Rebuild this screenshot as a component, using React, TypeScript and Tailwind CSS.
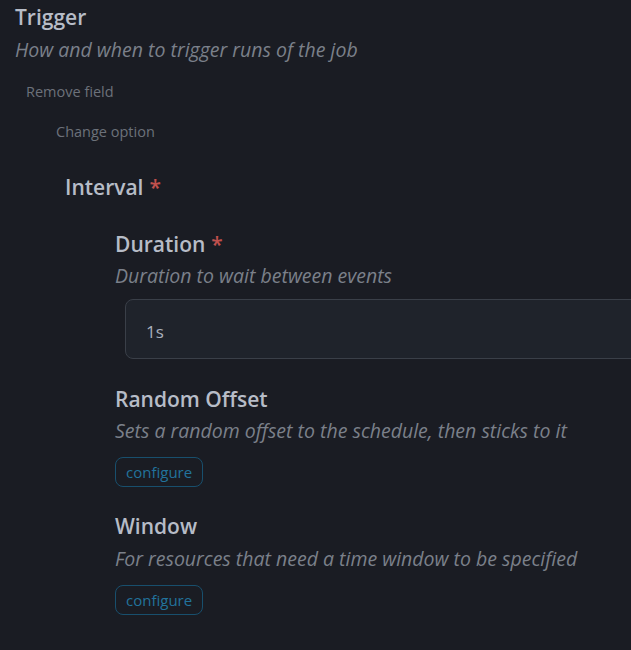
const FONT = "font-['Segoe_UI','Open_Sans','Noto_Sans',sans-serif]";

function Label({ text, required }: { text: string; required?: boolean }) {
  return (
    <div className="text-[21px] leading-[28px] font-semibold text-[#b7bcc7]">
      {text}
      {required && <span className="ml-1.5 text-[#c0504d]">*</span>}
    </div>
  );
}

function Desc({ text }: { text: string }) {
  return <div className="text-[19.5px] leading-[26px] italic text-[#7b808a]">{text}</div>;
}

function Configure() {
  return (
    <button className="h-[30px] px-[10px] rounded-lg border border-[#184f6d] text-[15px] text-[#22739c] leading-none">
      configure
    </button>
  );
}

export default function App() {
  return (
    <div className={`${FONT} min-h-[650px] w-full overflow-hidden bg-[#1a1c23] pl-[15px] pt-[3px]`}>
      <Label text="Trigger" />
      <div className="mt-[6px]">
        <Desc text="How and when to trigger runs of the job" />
      </div>
      <div className="ml-[11px] mt-[19px] text-[14.5px] leading-[20px] text-[#6c717a]">Remove field</div>
      <div className="ml-[41px] mt-[20px] text-[14.5px] leading-[20px] text-[#6c717a]">Change option</div>

      <div className="ml-[50px] mt-[31px]">
        <Label text="Interval" required />
        <div className="ml-[50px] mt-[29px] flex flex-col">
          <Label text="Duration" required />
          <div className="mt-[5px]">
            <Desc text="Duration to wait between events" />
          </div>
          <div className="ml-[10px] mt-[10px] mr-[-40px] h-[60px] rounded-lg border border-[#3a3f48] bg-[#1f232b] flex items-center pt-[5px] pl-[20px] text-[17px] text-[#a9b0bc]">
            1s
          </div>

          <div className="mt-[26px]">
            <Label text="Random Offset" />
          </div>
          <div className="mt-[5px]">
            <Desc text="Sets a random offset to the schedule, then sticks to it" />
          </div>
          <div className="mt-[13px]">
            <Configure />
          </div>

          <div className="mt-[25px]">
            <Label text="Window" />
          </div>
          <div className="mt-[6px]">
            <Desc text="For resources that need a time window to be specified" />
          </div>
          <div className="mt-[13px]">
            <Configure />
          </div>
        </div>
      </div>
    </div>
  );
}
